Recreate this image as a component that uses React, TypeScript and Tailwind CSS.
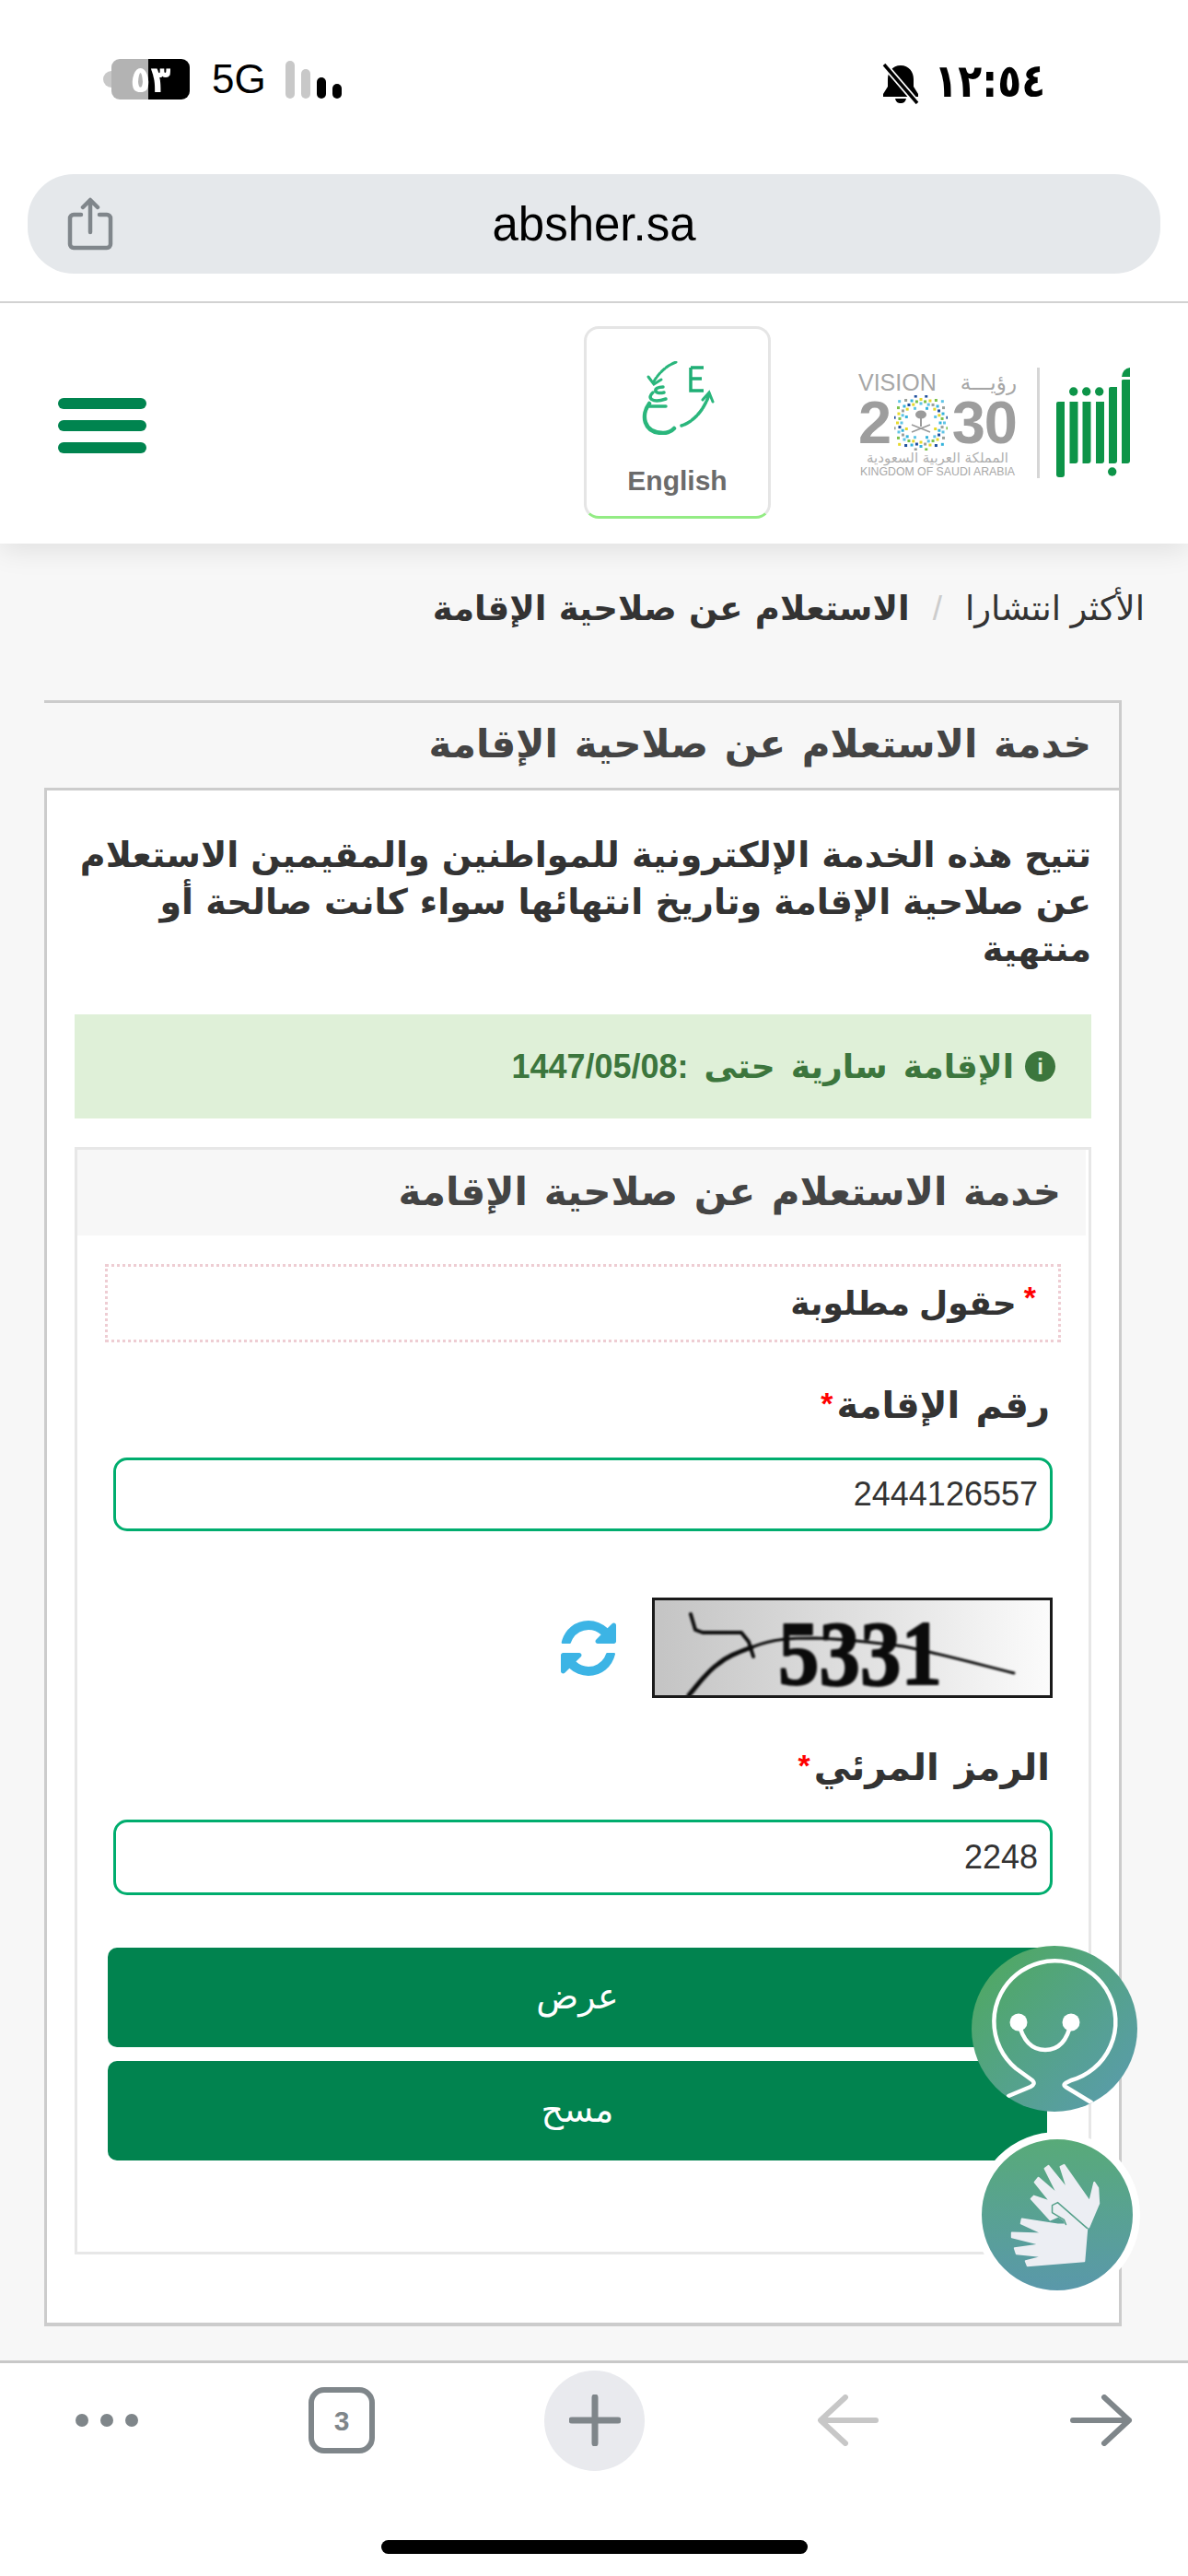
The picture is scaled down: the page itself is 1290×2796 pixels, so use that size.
import React from "react";

const stack = "font-['Liberation_Sans','DejaVu_Sans',sans-serif]";
const dejavu = "font-['DejaVu_Sans',sans-serif]";
const arial = "font-['Liberation_Sans',sans-serif]";

function Battery() {
  return (
    <div className="flex items-center">
      <div className="h-[18px] w-[9px] rounded-l-full bg-[#c8c8c8]" />
      <div className="relative flex h-[44px] w-[85px] items-center justify-center overflow-hidden rounded-[9px]">
        <div className="absolute inset-y-0 left-0 w-[40px] bg-[#b3b3b3]" />
        <div className="absolute inset-y-0 right-0 w-[45px] bg-black" />
        <span className={`relative scale-x-90 text-[40px] font-bold leading-none text-white ${dejavu}`} dir="ltr">٥٣</span>
      </div>
    </div>
  );
}

function Share() {
  return (
    <svg width="50" height="58" viewBox="0 0 50 58" fill="none" stroke="#80868b" strokeWidth="4.5" strokeLinecap="round" strokeLinejoin="round">
      <path d="M15 19H7a4 4 0 0 0-4 4v28a4 4 0 0 0 4 4h36a4 4 0 0 0 4-4V23a4 4 0 0 0-4-4h-8" />
      <path d="M25 38V4M17 11l8-8 8 8" />
    </svg>
  );
}

function Hamburger() {
  return (
    <div className="mt-[4px] flex w-[96px] flex-col gap-3">
      <div className="h-3 rounded-full bg-[#00844f]" />
      <div className="h-3 rounded-full bg-[#00844f]" />
      <div className="h-3 rounded-full bg-[#00844f]" />
    </div>
  );
}

function LangIcon() {
  return (
    <svg width="80" height="80" viewBox="0 0 80 80" fill="none" stroke="#2ab67c" strokeWidth="3" strokeLinecap="round">
      <path d="M38 1 C28 5 20 12 14 22" strokeDasharray="5 2" />
      <path d="M8 17l6 8 8-5" />
      <path d="M74 36 C70 50 58 66 44 70" strokeDasharray="7 2" strokeWidth="3.5" />
      <path d="M67 42l7-8 4 10" />
      <path d="M9 46 C0 58 2 78 24 78 C30 78 33 76 36 73" strokeWidth="4.5" />
      <path d="M9 49 H27 M13 34 C6 40 12 46 27 41 M24 28 C12 28 14 37 25 34" strokeWidth="3.5" />
      <path d="M54 7 H68 M54 7 V32 H68 M54 19 H66" strokeWidth="3.5" strokeLinecap="butt" stroke="#1fae75" />
    </svg>
  );
}

function StarDots() {
  const colors = ["#5fc4e6", "#7bc04a", "#e6d92d", "#1e4f9c", "#35b3dc", "#9aa09a"];
  const dots: React.ReactElement[] = [];
  for (let ring = 0; ring < 3; ring++) {
    const n = 32;
    for (let i = 0; i < n; i++) {
      const a = (i / n) * Math.PI * 2 - Math.PI / 2;
      const phase = Math.abs((i % 4) - 2) / 2;
      const r = 17 + ring * 4.5 + phase * (ring === 2 ? 7 : 4);
      if (ring === 0 && i % 2 === 1) continue;
      dots.push(
        <rect
          key={`${ring}-${i}`}
          x={29 + Math.cos(a) * r - 1.5}
          y={30 + Math.sin(a) * r - 1.5}
          width="3"
          height="3"
          fill={colors[(i * 5 + ring * 2) % colors.length]}
        />
      );
    }
  }
  return (
    <svg width="58" height="60" viewBox="0 0 58 60" className="shrink-0">
      {dots}
      <path d="M19 40 L39 32 M39 40 L19 32" stroke="#9a9a9a" strokeWidth="1.6" />
      <path d="M29 34 V24" stroke="#9a9a9a" strokeWidth="2" />
      <ellipse cx="29" cy="21" rx="6" ry="4.5" fill="#9a9a9a" />
    </svg>
  );
}

function AbsherMark() {
  return (
    <svg width="80" height="120" viewBox="0 0 80 120" className="shrink-0">
      <g fill="#0d9448">
        <path d="M0 39q0-2 2-2h7v79q0 3-3 3H3q-3 0-3-3z" />
        <path d="M14.5 37h9v64q0 3-3 3h-6z" />
        <path d="M28.5 37h9v64q0 3-3 3h-6z" />
        <path d="M43 37h9v64q0 3-3 3h-6z" />
        <path d="M57 23q0-2 2-2h7v80q0 3-3 3h-6z" />
        <path d="M71 14q0-1 2-1h7v88q0 3-3 3h-6z" />
        <path d="M71 10q1-9 9-10v10z" />
        <circle cx="18.7" cy="26" r="4.7" />
        <circle cx="32.7" cy="26" r="4.7" />
        <circle cx="46.7" cy="26" r="4.7" />
        <circle cx="60.7" cy="113" r="4.7" />
      </g>
    </svg>
  );
}

function Logos() {
  return (
    <div className="flex h-[120px] items-start" dir="ltr">
      <div className={`flex w-[172px] flex-col pt-[4px] ${arial}`}>
        <div className="flex h-[26px] w-full items-center justify-between text-[#a6a6a6]">
          <span className="text-[25px] leading-none">VISION</span>
          <span className={`text-[23px] leading-none ${dejavu}`}>رؤيـــة</span>
        </div>
        <div className="flex h-[60px] w-full items-center justify-between text-[65px] font-bold leading-none text-[#9d9d9d]">
          <span className="w-[34px]">2</span>
          <StarDots />
          <span className="tracking-[-1px]">30</span>
        </div>
        <div className={`mt-[1px] h-[15px] w-full whitespace-nowrap text-center text-[15px] leading-[15px] text-[#b0b0b0] ${dejavu}`}>المملكة العربية السعودية</div>
        <div className="h-[14px] w-full whitespace-nowrap text-center text-[12.3px] leading-[14px] text-[#a8a8a8]">KINGDOM OF SAUDI ARABIA</div>
      </div>
      <div className="ml-[22px] mr-[18px] h-[120px] w-[3px] bg-[#d6d6d6]" />
      <AbsherMark />
    </div>
  );
}

function EnglishCard() {
  return (
    <div className="mb-[3px] flex h-[209px] w-[203px] flex-col items-center overflow-hidden rounded-[16px] border-[3px] border-b-[#93ec84] border-l-[#e5e5e5] border-r-[#e5e5e5] border-t-[#e5e5e5] bg-white pt-[35px]">
      <LangIcon />
      <div className={`mt-[35px] text-[30px] font-bold leading-none text-[#6b6b6b] ${arial}`}>English</div>
    </div>
  );
}

function Star({ className }: { className: string }) {
  return <span className={`font-bold text-[#f00] ${arial} ${className}`}>*</span>;
}

function Field({ label, value, labelH, inputH }: { label: string; value: string; labelH: string; inputH: string }) {
  return (
    <div className="flex flex-col">
      <div className={`${labelH} flex items-end pb-[32px] pr-[12px]`}>
        <span className="text-[40px] font-bold leading-[50px] text-[#333] [word-spacing:6px]">{label}</span>
        <Star className="mb-[10px] mr-[4px] text-[34px] leading-[34px]" />
      </div>
      <div className={`${inputH} mx-[9px] flex items-center rounded-[15px] border-[3px] border-[#00ad6e] bg-white pr-[13px] text-[36px] text-[#333] ${arial}`}>
        {value}
      </div>
    </div>
  );
}

function Captcha() {
  return (
    <div className="relative h-[109px] w-[435px] overflow-hidden border-[3px] border-[#1a1a1a] bg-gradient-to-r from-[#c4c4c4] to-[#fbfbfb]" dir="ltr">
      <svg className="absolute inset-0" width="429" height="103" viewBox="0 0 429 103" fill="none" stroke="#0b0b0b" strokeLinecap="round" strokeLinejoin="round">
        <g className="blur-[0.8px]">
          <path d="M39 15 L44 32 L52 35 L94 35 L102 45 L107 61" strokeWidth="4" />
          <path d="M105 51 C130 41 150 41 174 41 C210 42 240 46 270 50 C310 58 350 69 390 79" strokeWidth="3" />
          <path d="M37 103 C48 90 58 76 69 69 C80 60 92 56 105 51" strokeWidth="5" />
          <text x="134" y="91" fontSize="100" fontWeight="bold" fontFamily="Liberation Serif, serif" fill="#0b0b0b" stroke="#0b0b0b" strokeWidth="2" textLength="178" lengthAdjust="spacingAndGlyphs">5331</text>
        </g>
      </svg>
    </div>
  );
}

function Refresh() {
  return (
    <svg width="60" height="60" viewBox="0 0 1536 1536" fill="#3cb4e5" className="shrink-0">
      <path d="M1511 928q0 5-1 7-64 268-268 434.5T764 1536q-146 0-282.5-55T238 1324l-129 129q-19 19-45 19t-45-19-19-45V960q0-26 19-45t45-19h448q26 0 45 19t19 45-19 45l-137 137q71 66 161 102t187 36q134 0 250-65t186-179q11-17 53-117 8-23 30-23h192q13 0 22.5 9.5t9.5 22.5zm25-800v448q0 26-19 45t-45 19h-448q-26 0-45-19t-19-45 19-45l138-138Q969 256 768 256q-134 0-250 65T332 500q-11 17-53 117-8 23-30 23H50q-13 0-22.5-9.5T18 608v-7q65-268 270-434.5T768 0q146 0 284 55.5T1297 212l130-129q19-19 45-19t45 19 19 45z" />
    </svg>
  );
}

function ChatBot() {
  return (
    <div className="absolute left-[1055px] top-[2112px] size-[180px] overflow-hidden rounded-full bg-gradient-to-br from-[#4fa958] to-[#5b9ab0]">
      <svg width="180" height="180" viewBox="0 0 180 180" fill="none" stroke="#fff" strokeWidth="4.5" strokeLinecap="round" strokeLinejoin="round">
        <path d="M40 163 L64 153 Q70 150 66 146 L48 133 A66 66 0 1 1 108 146 L102 149 Q99 151 102 153 L130 170" />
        <path d="M51 83 Q58 113 80 113 Q102 113 108 83" />
        <circle cx="51" cy="83" r="9.5" fill="#fff" stroke="none" />
        <circle cx="108" cy="83" r="9.5" fill="#fff" stroke="none" />
      </svg>
    </div>
  );
}

function SignHands() {
  return (
    <div className="absolute left-[1058px] top-[2314px] size-[180px] rounded-full border-[8px] border-white bg-gradient-to-b from-[#58aa78] to-[#5a98aa]">
      <svg className="absolute inset-0" width="164" height="164" viewBox="0 0 165 165" fill="#eceef3" stroke="#eceef3" strokeLinejoin="round" strokeLinecap="round" strokeWidth="2">
        <path d="M117 96 L128 70 L127 53 L123 47 L118 68 L90 28 L86 30 L94 55 L73 29 L69 32 L83 60 L62 42 L58 47 L75 68 L57 62 L54 65 L75 88 L93 80 Z" />
        <path d="M115 97 L112 133 L50 138 L48 133 L68 128 L38 125 L36 119 L65 115 L33 107 L33 102 L67 103 L43 92 L44 87 L83 93 L92 93 L90 88 L77 80 L77 72 L83 69 Z" />
        <path d="M92 93 L90 88 L77 80 L77 72 L83 69 L115 97" fill="none" stroke="#55a08a" strokeWidth="1.5" />
      </svg>
    </div>
  );
}

function BottomBar() {
  return (
    <div className="mt-auto flex h-[234px] flex-col border-t-[3px] border-[#c8c8c8] bg-white" dir="ltr">
      <div className="flex h-[124px] items-center pl-[82px]">
        <div className="flex w-[68px] justify-between">
          <span className="size-[14px] rounded-full bg-[#7f868a]" />
          <span className="size-[14px] rounded-full bg-[#7f868a]" />
          <span className="size-[14px] rounded-full bg-[#7f868a]" />
        </div>
        <div className={`ml-[185px] flex size-[72px] items-center justify-center rounded-[17px] border-[6px] border-[#7f868a] text-[30px] font-bold text-[#7f868a] ${arial}`}>3</div>
        <div className="ml-[184px] flex size-[109px] items-center justify-center rounded-full bg-[#e9eaee]">
          <svg width="56" height="56" viewBox="0 0 56 56" stroke="#7f868a" strokeWidth="7" strokeLinecap="round"><path d="M28 3v50M3 28h50" /></svg>
        </div>
        <svg className="ml-[188px]" width="66" height="56" viewBox="0 0 66 56" fill="none" stroke="#c7c7c7" strokeWidth="6" strokeLinecap="round" strokeLinejoin="round"><path d="M63 28H4M30 3L3 28l27 25" /></svg>
        <svg className="ml-[208px]" width="68" height="56" viewBox="0 0 68 56" fill="none" stroke="#7f868a" strokeWidth="6" strokeLinecap="round" strokeLinejoin="round"><path d="M3 28h61M37 3l27 25-27 25" /></svg>
      </div>
      <div className="mt-[68px] flex justify-center">
        <div className="h-[15px] w-[463px] rounded-full bg-black" />
      </div>
    </div>
  );
}

export default function App() {
  return (
    <div className={`relative flex h-[2796px] w-[1290px] flex-col overflow-hidden bg-[#f7f7f7] ${stack}`} dir="rtl">
      {/* browser chrome */}
      <div className="relative z-10 bg-white pb-px" dir="ltr">
        <div className="flex h-[189px] items-start justify-between pl-[112px] pr-[155px] pt-[62px]">
          <div className="mt-[2px] flex items-center">
            <Battery />
            <span className={`ml-[24px] text-[44px] leading-[44px] text-black ${arial}`}>5G</span>
            <div className="ml-[21px] flex h-[41px] items-end gap-[7px]">
              <span className="h-[41px] w-[10px] rounded-full bg-[#c8c8c8]" />
              <span className="h-[32px] w-[10px] rounded-full bg-[#c8c8c8]" />
              <span className="h-[23px] w-[10px] rounded-full bg-black" />
              <span className="h-[16px] w-[10px] rounded-full bg-black" />
            </div>
          </div>
          <div className="flex items-center">
            <svg className="mt-[6px]" width="42" height="44" viewBox="0 0 42 44" fill="black">
              <path d="M21 2c-9 0-14 7-14 15v8L2 33v3h38v-3l-5-8v-8c0-8-5-15-14-15zM15 38c1 4 3 5 6 5s5-1 6-5z" />
              <path d="M3 1 L39 43" stroke="#fff" strokeWidth="7" />
              <path d="M3 1 L39 43" stroke="#000" strokeWidth="3.5" />
            </svg>
            <span className={`-ml-[6px] origin-right scale-x-[0.85] text-[50px] font-bold leading-[52px] text-black ${dejavu}`} dir="ltr">١٢:٥٤</span>
          </div>
        </div>
        <div className="px-[30px]">
          <div className="relative flex h-[108px] items-center justify-center rounded-[50px] bg-[#e5e8eb]">
            <div className="absolute left-[43px] top-[25px]"><Share /></div>
            <span className={`text-[51px] leading-none text-black ${arial}`}>absher.sa</span>
          </div>
        </div>
        <div className="mt-[30px] h-[2px] bg-[#d2d2d2]" />
      </div>

      {/* site header */}
      <div className="flex h-[260px] items-center bg-white pl-[63px] pr-[63px] shadow-[0_6px_30px_rgba(0,0,0,0.1)]" dir="ltr">
        <Hamburger />
        <div className="ml-[475px]"><EnglishCard /></div>
        <div className="mb-[3px] ml-auto"><Logos /></div>
      </div>

      {/* breadcrumb */}
      <div className="flex h-[170px] items-start pr-[47px] pt-[49px] text-[37px] leading-[44px] text-[#333]">
        <span>الأكثر انتشارا</span>
        <span className="mx-[25px] text-[#ccc]">/</span>
        <span className="font-bold [word-spacing:3px]">الاستعلام عن صلاحية الإقامة</span>
      </div>

      {/* outer panel */}
      <div className="mr-[72px] flex w-[1170px] flex-col self-start border-r-[3px] border-t-[3px] border-[#ccc]">
        <div className="flex h-[92px] items-center bg-[#f7f7f7] pb-[2px] pr-[30px]">
          <h1 className="text-[42px] font-bold leading-none text-[#444] [word-spacing:6px]">خدمة الاستعلام عن صلاحية الإقامة</h1>
        </div>
        <div className="border-b-[4px] border-l-[3px] border-t-[3px] border-[#ccc] bg-white px-[30px] pb-[74px] pt-[45px]">
          <p className="whitespace-nowrap text-[38px] font-bold leading-[51px] text-[#333] [word-spacing:2.5px]">
            تتيح هذه الخدمة الإلكترونية للمواطنين والمقيمين الاستعلام
            <br />
            عن صلاحية الإقامة وتاريخ انتهائها سواء كانت صالحة أو
            <br />
            منتهية
          </p>

          <div className="mt-[45px] flex h-[113px] items-center gap-[12px] bg-[#dff0d8] pr-[39px] text-[36px] font-bold text-[#3c763d] [word-spacing:7px]">
            <span className={`flex size-[33px] items-center justify-center rounded-full bg-[#3c763d] text-[24px] leading-none text-[#dff0d8] ${arial}`}>i</span>
            <span>الإقامة سارية حتى :1447/05/08</span>
          </div>

          <div className="mt-[31px] border-[3px] border-[#e7e7e7] bg-white">
            <div className="mr-[3px] flex h-[93px] items-center bg-[#f7f7f7] pb-[2px] pr-[27px]">
              <h2 className="text-[42px] font-bold leading-none text-[#444] [word-spacing:6px]">خدمة الاستعلام عن صلاحية الإقامة</h2>
            </div>
            <div className="px-[30px]">
              <div className="mt-[31px] flex h-[85px] items-center border-[3px] border-dotted border-[#eecdd3] pr-[24px]">
                <Star className="mb-[14px] ml-[8px] text-[34px] leading-[34px]" />
                <span className="text-[36px] font-bold leading-none text-[#333]">حقول مطلوبة</span>
              </div>

              <Field label="رقم الإقامة" value="2444126557" labelH="h-[125px]" inputH="h-[80px]" />

              <div className="mr-[9px] mt-[72px] flex items-center gap-[39px]">
                <Captcha />
                <Refresh />
              </div>

              <Field label="الرمز المرئي" value="2248" labelH="h-[132px]" inputH="h-[82px]" />

              <div className="ml-[3px] mr-[15px] mt-[57px] flex flex-col gap-[15px] text-[38px] text-white">
                <button className="flex h-[108px] items-center justify-center rounded-[10px] bg-[#01834f] pb-[2px]">عرض</button>
                <button className="flex h-[108px] items-center justify-center rounded-[10px] bg-[#01834f] pb-[2px]">مسح</button>
              </div>
            </div>
            <div className="h-[99px]" />
          </div>
        </div>
      </div>

      <BottomBar />

      <ChatBot />
      <SignHands />
    </div>
  );
}
